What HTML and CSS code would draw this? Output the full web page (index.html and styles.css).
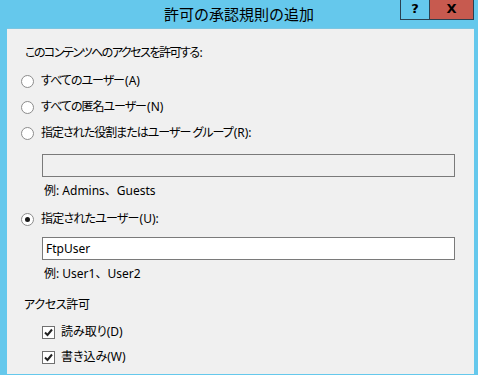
FILE: index.html
```html
<!DOCTYPE html>
<html lang="ja">
<head>
  <meta charset="UTF-8" />
  <title>許可の承認規則の追加</title>
  <link rel="stylesheet" href="styles.css">
</head>
<body>

<div class="window">
  <div class="titlebar">
    <span class="title">許可の承認規則の追加</span>
    <div class="caption-buttons">
      <span class="cap-btn help">?</span>
      <span class="cap-btn close">X</span>
    </div>
  </div>

  <div class="client">
    <p class="heading">このコンテンツへのアクセスを許可する<span class="key">:</span></p>

    <div class="radio-list">
      <div class="option"><span class="radio"></span>すべてのユーザー<span class="key">(A)</span></div>
      <div class="option"><span class="radio"></span>すべての匿名ユーザー<span class="key">(N)</span></div>
      <div class="option"><span class="radio"></span>指定された役割またはユーザー グループ<span class="key">(R):</span></div>
    </div>

    <div class="textbox disabled"></div>
    <p class="example">例: Admins、Guests</p>

    <div class="option selected-option"><span class="radio checked"></span>指定されたユーザー<span class="key">(U):</span></div>

    <div class="textbox">FtpUser</div>
    <p class="example">例: User1、User2</p>

    <p class="section">アクセス許可</p>

    <div class="check-list">
      <div class="check-row">
        <span class="checkbox"><svg viewBox="0 0 11 11" width="11" height="11"><path d="M2 5.5 L4.5 8 L9 2.5" fill="none" stroke="#222" stroke-width="2"/></svg></span>
        読み取り(D)
      </div>
      <div class="check-row">
        <span class="checkbox"><svg viewBox="0 0 11 11" width="11" height="11"><path d="M2 5.5 L4.5 8 L9 2.5" fill="none" stroke="#222" stroke-width="2"/></svg></span>
        書き込み(W)
      </div>
    </div>
  </div>
</div>

</body>
</html>
```

FILE: styles.css
```css
html, body {
  margin: 0;
  padding: 0;
}
body {
  font-family: "Noto Sans", "Noto Sans CJK JP", sans-serif;
  font-size: 12px;
  font-feature-settings: "palt";
  color: #000;
  background: #65c8ec;
  width: 478px;
  height: 375px;
  overflow: hidden;
}
.window {
  padding: 0 4px 0 7px;
}
.titlebar {
  height: 28px;
  position: relative;
  display: flex;
  justify-content: center;
  align-items: center;
  margin: 0 -4px 0 -7px;
}
.title {
  font-family: "Noto Sans CJK JP", sans-serif;
  font-feature-settings: normal;
  font-size: 15px;
  line-height: 20px;
  margin-top: -1px;
}
.caption-buttons {
  position: absolute;
  top: 0;
  right: 4px;
  display: flex;
}
.cap-btn {
  height: 20px;
  box-sizing: border-box;
  border: 1px solid #2a4050;
  font-family: "DejaVu Sans", sans-serif;
  font-weight: bold;
  font-size: 13px;
  line-height: 17px;
  text-align: center;
}
.help {
  width: 29px;
  border-right: none;
  border-top: none;
}
.close {
  width: 45px;
  background: #c75a4f;
  border-top: none;
}
.client {
  background: #f0f0f0;
  border-top: 1px solid #7cc6e2;
  height: 346px;
  padding: 16px 0 0 18px;
  box-sizing: border-box;
}
p {
  margin: 0;
  line-height: 16px;
}
.heading {
  letter-spacing: -1.5px;
}
.key {
  letter-spacing: 0;
  margin-left: 1px;
}
.radio-list {
  display: flex;
  flex-direction: column;
  gap: 10px;
  margin: 12px 0 0 -4px;
}
.option {
  display: flex;
  align-items: center;
  height: 16px;
  line-height: 16px;
  letter-spacing: -1px;
}
.radio {
  width: 13px;
  height: 13px;
  box-sizing: border-box;
  border: 1px solid #8c8c8c;
  border-radius: 50%;
  background: #fff;
  margin-right: 7px;
  display: flex;
  align-items: center;
  justify-content: center;
}
.radio.checked::after {
  content: "";
  width: 5px;
  height: 5px;
  border-radius: 50%;
  background: #1a1a1a;
}
.textbox {
  margin: 13px 0 0 17px;
  width: 413px;
  height: 23px;
  box-sizing: border-box;
  border: 1px solid #7a7a7a;
  background: #fff;
  padding: 0 3px;
  line-height: 21px;
}
.textbox.disabled {
  background: #f0f0f0;
}
.example {
  margin: 6px 0 0 19px;
  font-feature-settings: normal;
}
.selected-option {
  margin: 12px 0 0 -4px;
  letter-spacing: -0.8px;
}
.selected-option + .textbox {
  margin-top: 10px;
}
.section {
  margin: 15px 0 0 -1px;
  letter-spacing: -0.3px;
}
.check-list {
  display: flex;
  flex-direction: column;
  gap: 9px;
  margin: 11px 0 0 17px;
}
.check-row {
  display: flex;
  align-items: center;
  height: 16px;
  line-height: 16px;
}
.checkbox {
  width: 13px;
  height: 13px;
  box-sizing: border-box;
  border: 1px solid #707070;
  background: #fff;
  margin-right: 6px;
  display: flex;
  align-items: center;
  justify-content: center;
}
```
